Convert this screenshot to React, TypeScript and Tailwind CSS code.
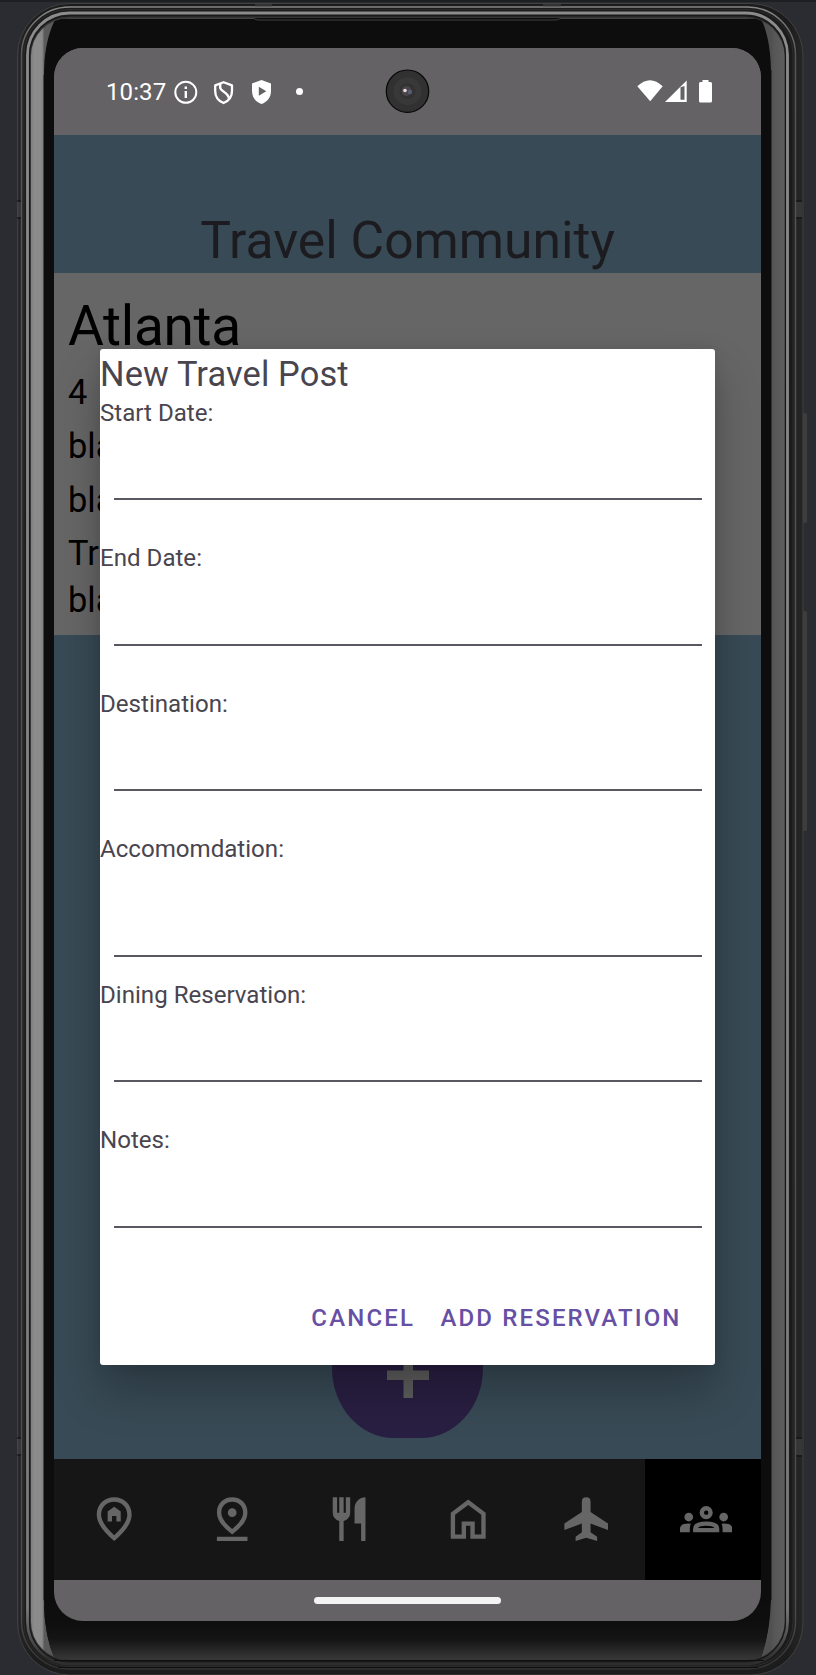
import React from "react";

const DeviceShell = () => (
  <svg className="absolute inset-0" width="816" height="1675" viewBox="0 0 816 1675" aria-hidden="true">
    <defs>
      <linearGradient id="bandOuter" gradientUnits="userSpaceOnUse" x1="17" x2="803" y1="0" y2="0">
        <stop offset="0" stopColor="#3a3a3a" />
        <stop offset="0.003" stopColor="#242424" />
        <stop offset="0.02" stopColor="#1c1c1c" />
        <stop offset="0.98" stopColor="#1c1c1c" />
        <stop offset="1" stopColor="#262626" />
      </linearGradient>
      <linearGradient id="glassEdge" gradientUnits="userSpaceOnUse" x1="30" x2="786" y1="0" y2="0">
        <stop offset="0" stopColor="#7c7c7c" />
        <stop offset="0.006" stopColor="#8c8c8c" />
        <stop offset="0.016" stopColor="#8a8a8a" />
        <stop offset="0.019" stopColor="#5a5a5a" />
        <stop offset="0.5" stopColor="#444444" />
        <stop offset="0.98" stopColor="#505050" />
        <stop offset="0.985" stopColor="#575757" />
        <stop offset="1" stopColor="#5f5f5f" />
      </linearGradient>
      <linearGradient id="rimLine" gradientUnits="userSpaceOnUse" x1="0" x2="0" y1="3" y2="1675">
        <stop offset="0" stopColor="#8a8a8a" />
        <stop offset="0.03" stopColor="#565656" />
        <stop offset="0.96" stopColor="#4c4c4c" />
        <stop offset="1" stopColor="#303030" />
      </linearGradient>
      <linearGradient id="innerLine" gradientUnits="userSpaceOnUse" x1="0" x2="0" y1="3" y2="1675">
        <stop offset="0" stopColor="#8c8c8c" />
        <stop offset="0.96" stopColor="#7a7a7a" />
        <stop offset="0.99" stopColor="#303030" />
        <stop offset="1" stopColor="#2a2a2a" />
      </linearGradient>
      <linearGradient id="chin" gradientUnits="userSpaceOnUse" x1="0" x2="0" y1="1621" y2="1661">
        <stop offset="0" stopColor="#0e0e0e" />
        <stop offset="0.45" stopColor="#141414" />
        <stop offset="1" stopColor="#3a3a3a" />
      </linearGradient>
      <clipPath id="glassClip">
        <rect x="31" y="18" width="755" height="1642" rx="38" />
      </clipPath>
    </defs>
    <rect width="816" height="2" fill="#1e1f23" />
    <rect x="802" y="413" width="5" height="110" rx="1.5" fill="#3d3d3d" />
    <rect x="802" y="611" width="5" height="220" rx="1.5" fill="#3d3d3d" />
    <rect x="17.5" y="3.5" width="785.5" height="1671.5" rx="52" fill="url(#bandOuter)" stroke="#404040" />
    <rect x="21.5" y="7" width="774" height="1662" rx="48" fill="none" stroke="url(#rimLine)" strokeWidth="1.5" />
    <rect x="24" y="9.5" width="769" height="1657" rx="45" fill="#1b1b1b" stroke="#2c2c2c" />
    <rect x="27.5" y="13" width="760" height="1651" rx="42" fill="none" stroke="url(#innerLine)" strokeWidth="2.8" />
    <rect x="29.5" y="16" width="756" height="1645.5" rx="40" fill="#363636" stroke="#181818" />
    <rect x="31" y="18" width="753.5" height="1642" rx="38" fill="url(#glassEdge)" />
    <g clipPath="url(#glassClip)">
      <path d="M44 75Q44 43 54 22L56 18H759L763 23Q771 43 771 75V1600Q770 1634 760 1660H55Q44 1634 44 1600Z" fill="#0d0d0d" />
      <path d="M44 1606Q45 1638 55 1660H760Q769 1638 770 1606Z" fill="url(#chin)" />
      <path d="M60 18.5H254Q256 20 259 20H555Q558 20 560 18.5H755" fill="none" stroke="#414141" />
      <path d="M771.5 70V1600" stroke="#333" />
      <path d="M43.5 75V1600" stroke="#464646" />
    </g>
    <path d="M54 1660.5H764M58 1667.5H758" stroke="#101010" />
    <path d="M17 201h4M17 218h4M17 1438h4M17 1455h4M796 201h6M796 218h6M796 1438h6M796 1456h6" stroke="#111" />
    <path d="M17 202h4v15h-4zM17 1439h4v15h-4zM796 202h6v15h-6zM796 1439h6v16h-6zM255 3h17v4h-17zM543 3h18v4h-18z" fill="#484848" opacity=".5" />
  </svg>
);

const Camera = () => (
  <svg className="absolute left-[331px] top-[21px]" width="45" height="45" viewBox="0 0 45 45" aria-hidden="true">
    <circle cx="22.5" cy="22.2" r="21.2" fill="#313131" stroke="#080808" strokeWidth="1.2" />
    <circle cx="22.5" cy="22.2" r="14" fill="#383838" />
    <circle cx="22.5" cy="22.2" r="8" fill="#323232" />
    <circle cx="21.5" cy="22" r="5" fill="#4b454b" />
    <circle cx="25" cy="23" r="2.2" fill="#555d72" />
    <circle cx="20" cy="21.5" r="1.8" fill="#e4dada" />
  </svg>
);

const StatusBar = () => (
  <header className="relative flex h-[86.5px] shrink-0 bg-[#656266] text-white">
    <span className="ml-[52px] mt-[30px] w-[65.5px] text-[24px] leading-[28px] tracking-[0.1px]">10:37</span>
    <svg className="mt-[31px]" width="132" height="26" viewBox="172 79 132 26" fill="none" stroke="#fff" aria-hidden="true">
      <circle cx="185.8" cy="92.3" r="10.5" strokeWidth="2" />
      <path d="M185.8 91v7M185.8 86.4v2.6" strokeWidth="2.4" />
      <path d="M223.6 82.2L232 85.4V91C232 97 228.5 101 223.6 103C218.5 101 215.2 97 215.2 91V85.4Z" strokeWidth="2.3" strokeLinejoin="round" />
      <path d="M220.2 84V87.5C220.2 91.5 229 92.5 229 99" strokeWidth="2.4" />
      <path d="M261.5 80L271 83.6V91C271 97.5 267 102 261.5 104C256 102 252 97.5 252 91V83.6Z" fill="#fff" stroke="none" />
      <path d="M258.8 86.8V95.7L266.3 91.3Z" fill="#656266" stroke="none" />
      <circle cx="299.5" cy="91.6" r="3.5" fill="#fff" stroke="none" />
    </svg>
    <Camera />
    <svg className="ml-auto mr-[47px] mt-[31px]" width="78" height="26" viewBox="636 79 78 26" fill="#fff" aria-hidden="true">
      <path d="M637.3 86.3Q650 74.2 662.7 86.3L650.2 101.2Z" />
      <path fillRule="evenodd" d="M686.7 80.4V102.1H665ZM680.5 87.2V99.8H684.5V86Z" />
      <path d="M702.5 80h6v2h2q1.5 0 1.5 1.5V101q0 1.5-1.5 1.5h-10q-1.5 0-1.5-1.5V83.5q0-1.5 1.5-1.5h2z" />
    </svg>
  </header>
);

const fields = [
  { label: "Start Date:", gap: "mt-[70.5px]" },
  { label: "End Date:", gap: "mt-[70.5px]" },
  { label: "Destination:", gap: "mt-[70.5px]" },
  { label: "Accomomdation:", gap: "mt-[90.5px]" },
  { label: "Dining Reservation:", gap: "mt-[70.5px]" },
  { label: "Notes:", gap: "mt-[70.5px]" },
];

const Dialog = () => (
  <section
    role="dialog"
    className="absolute left-[46px] top-[301px] flex h-[1016px] w-[615px] flex-col rounded-[3px] bg-white text-[#49454f] shadow-[0_26px_44px_rgba(0,0,0,0.25),0_0_14px_rgba(0,0,0,0.1)]"
  >
    <h2 className="mt-[2px] h-[43.7px] shrink-0 text-[34.4px] leading-[47px] tracking-[0.12px]">New Travel Post</h2>
    {fields.map((f) => (
      <label key={f.label} className="block h-[145.5px] shrink-0">
        <span className="block h-[33px] text-[24.1px] leading-[37px]">{f.label}</span>
        <span className={"ml-[14px] mr-[13px] block h-[2px] bg-[#5b5761] " + f.gap} />
      </label>
    ))}
    <div className="mt-[36px] flex justify-end pr-[33.5px] text-[24px] font-medium leading-[28px] text-[#6750a4]">
      <button className="mr-[25.5px] tracking-[2.14px]">CANCEL</button>
      <button className="tracking-[2.14px]">ADD RESERVATION</button>
    </div>
  </section>
);

const icons = [
  <path fillRule="evenodd" d="M12 22Q4 15.300 4 10C4 5 7.600 2 12 2S20 5 20 10Q20 15.300 12 22ZM12 19.350Q18 13.800 18 10.100C18 6.450 15.400 4 12 4S6 6.450 6 10.100Q6 13.800 12 19.350ZM9 13V8.500L12 6.300L15 8.500V13H13V10.500H11V13Z" />,
  <path fillRule="evenodd" d="M12 19Q5 13.850 5 9C5 4.800 8 2 12 2S19 4.800 19 9Q19 13.850 12 19ZM12 16.500Q17 12.300 17 9C17 5.900 14.800 4 12 4S7 5.900 7 9Q7 12.300 12 16.500ZM12 7A2 2 0 1 1 12 11A2 2 0 0 1 12 7ZM5 20H19V22H5Z" />,
  <path d="M7 22V12.850Q5.730 12.500 4.860 11.450Q4 10.400 4 9V2H6V9H7V2H9V9H10V2H12V9Q12 10.400 11.140 11.450Q10.270 12.500 9 12.850V22ZM17 22V14H14V7Q14 4.930 15.460 3.460Q16.930 2 19 2V22Z" />,
  <path d="M6 19H9V13H15V19H18V10L12 5.500L6 10ZM4 21V9L12 3L20 9V21H13V15H11V21Z" />,
  <path d="M7.150 22V20L10 18V14L2 17V14L10 8.650V4Q10 2 12 2T14 4V8.650L22 14V17L14 14V18L17 20V22L12 20.500Z" />,
  <path fillRule="evenodd" d="M0 18V16.400Q0 14 4 14L5 14.100Q4.500 15 4.500 16.250V18ZM6 18V16.400Q6 13 12 13T18 16.400V18ZM19.500 18V16.250Q19.500 15 19 14.100L20 14Q24 14 24 16.400V18ZM8.200 16H15.800Q15 15 12 15T8.200 16ZM4 13A2 2 0 1 1 4 9A2 2 0 0 1 4 13ZM20 13A2 2 0 1 1 20 9A2 2 0 0 1 20 13ZM12 12A3 3 0 1 1 12 6A3 3 0 0 1 12 12ZM12 10A1 1 0 1 0 12 8A1 1 0 0 0 12 10Z" />,
];

const BottomNav = () => (
  <nav className="flex h-[121px] shrink-0 bg-[#161616] pl-[1px] text-[#666666]">
    {icons.map((icon, i) => (
      <button
        key={i}
        className={
          i === 5
            ? "flex flex-1 items-center justify-center bg-black pl-[5px]"
            : "flex w-[118.1px] items-center justify-center"
        }
      >
        <svg width="52.4" height="52.4" viewBox="0 0 24 24" fill="currentColor" aria-hidden="true">
          {icon}
        </svg>
      </button>
    ))}
  </nav>
);

export default function App() {
  return (
    <div className="relative h-[1675px] w-[816px] overflow-hidden bg-[#2b2c31] pl-[54px] pt-[48px] font-['Roboto',sans-serif]">
      <DeviceShell />
      <main className="relative flex h-[1573px] w-[707px] flex-col overflow-hidden rounded-[29px] bg-[#656266]">
        <StatusBar />
        <div className="flex h-[138.5px] shrink-0 items-end justify-center bg-[#384a55] pb-[2px]">
          <h1 className="text-[51.6px] leading-[60px] text-[#1c1b1f]">Travel Community</h1>
        </div>
        <article className="h-[362px] shrink-0 bg-[#666666] pl-[14px] pt-[21px] text-[34.4px] leading-[40px] text-black">
          <h2 className="h-[78px] text-[55px] leading-[64px] tracking-[-0.3px]">Atlanta</h2>
          <p className="h-[54px]">4</p>
          <p className="h-[53.5px]">bla</p>
          <p className="h-[53.5px]">bla</p>
          <p className="h-[46.5px]">Tr</p>
          <p>bla</p>
        </article>
        <div className="flex flex-1 items-end justify-center bg-[#384a55] pb-[20.5px]">
          <button className="flex h-[140px] w-[151px] items-end justify-center rounded-[62px/70px] bg-[#291f42] pb-[40px]" aria-label="Add">
            <svg width="42" height="46" viewBox="0 0 42 46" fill="#5e5e5e" aria-hidden="true">
              <path d="M16.5 0H26V18.5H42V28H26V46H16.5V28H0V18.5H16.5Z" />
            </svg>
          </button>
        </div>
        <BottomNav />
        <footer className="flex h-[41.5px] shrink-0 justify-center pt-[17px]">
          <div className="h-[7px] w-[187px] rounded-full bg-[#f3f3f3]" />
        </footer>
        <Dialog />
      </main>
    </div>
  );
}
